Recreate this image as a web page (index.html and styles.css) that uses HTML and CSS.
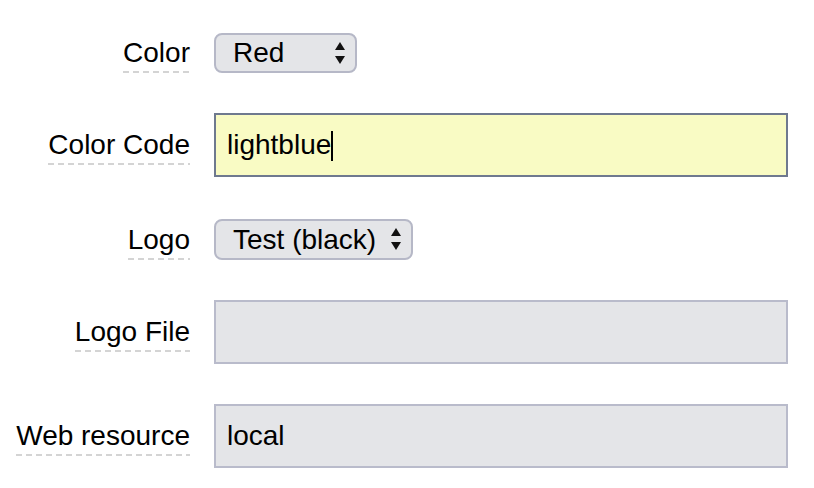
FILE: index.html
```html
<!DOCTYPE html>
<html lang="en">
<head>
<meta charset="utf-8">
<title>Settings form</title>
<link rel="stylesheet" href="styles.css">
</head>
<body>
<form class="form">
  <label class="label">Color</label>
  <div class="control">
    <div class="select select-color">
      <span class="select-text">Red</span>
      <svg class="arrows" width="10" height="22" viewBox="0 0 10 22"><path d="M5 0 L10 8 L0 8 Z M0 14 L10 14 L5 22 Z" fill="#111"/></svg>
    </div>
  </div>

  <label class="label">Color Code</label>
  <div class="control">
    <div class="field focused"><span class="field-text">lightblue</span><span class="caret"></span></div>
  </div>

  <label class="label label-shift">Logo</label>
  <div class="control control-shift">
    <div class="select select-logo">
      <span class="select-text">Test (black)</span>
      <svg class="arrows" width="10" height="22" viewBox="0 0 10 22"><path d="M5 0 L10 8 L0 8 Z M0 14 L10 14 L5 22 Z" fill="#111"/></svg>
    </div>
  </div>

  <label class="label">Logo File</label>
  <div class="control">
    <div class="field disabled"><span class="field-text">&nbsp;</span></div>
  </div>

  <label class="label">Web resource</label>
  <div class="control">
    <div class="field disabled"><span class="field-text">local</span></div>
  </div>
</form>
</body>
</html>
```

FILE: styles.css
```css
html, body {
  margin: 0;
  padding: 0;
  background: #ffffff;
}

body {
  font-family: "Liberation Sans", Arial, sans-serif;
  font-size: 28px;
  color: #000;
}

.form {
  display: grid;
  grid-template-columns: 190px 574px;
  column-gap: 24px;
  row-gap: 40px;
  align-items: baseline;
  padding-top: 33px;
}

.label {
  justify-self: end;
  line-height: 28px;
  background-image: repeating-linear-gradient(to right, #d4d4d4 0 6px, transparent 6px 10px);
  background-size: 100% 2px;
  background-repeat: no-repeat;
  background-position: left bottom;
  padding-bottom: 6px;
}

.control {
  display: flex;
  align-items: baseline;
}

.control-shift {
  margin-top: 2px;
}

.select {
  box-sizing: border-box;
  height: 40px;
  display: flex;
  align-items: center;
  justify-content: space-between;
  background: #e4e5e8;
  border: 2px solid #b6b8c7;
  border-radius: 8px;
  padding: 0 10px 0 17px;
}

.select-color { width: 143px; }
.select-logo { width: 199px; height: 41px; }

.select-text {
  line-height: 32px;
}

.arrows {
  flex: none;
  margin-bottom: 1px;
}

.field {
  box-sizing: border-box;
  width: 574px;
  height: 64px;
  display: flex;
  align-items: center;
  padding: 0 11px;
}

.field-text {
  line-height: 32px;
}

.focused {
  background: #f9fbc4;
  border: 2px solid #6f798f;
}

.disabled {
  background: #e4e5e8;
  border: 2px solid #b9bbcb;
}

.caret {
  display: inline-block;
  width: 2px;
  height: 30px;
  background: #000;
  align-self: center;
  margin-top: 2px;
}
```
